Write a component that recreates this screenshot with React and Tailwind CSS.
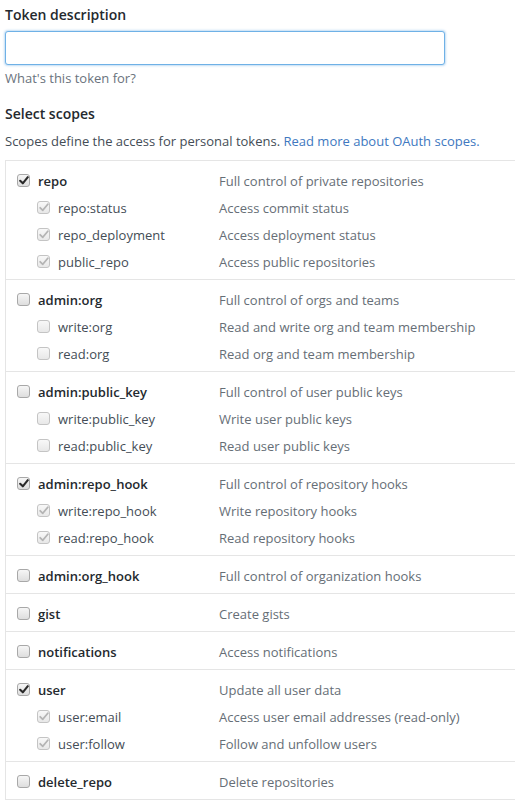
import React from "react";

const groups = [
  { name: "repo", desc: "Full control of private repositories", checked: true, subs: [
    ["repo:status", "Access commit status"],
    ["repo_deployment", "Access deployment status"],
    ["public_repo", "Access public repositories"],
  ]},
  { name: "admin:org", desc: "Full control of orgs and teams", checked: false, subs: [
    ["write:org", "Read and write org and team membership"],
    ["read:org", "Read org and team membership"],
  ]},
  { name: "admin:public_key", desc: "Full control of user public keys", checked: false, subs: [
    ["write:public_key", "Write user public keys"],
    ["read:public_key", "Read user public keys"],
  ]},
  { name: "admin:repo_hook", desc: "Full control of repository hooks", checked: true, subs: [
    ["write:repo_hook", "Write repository hooks"],
    ["read:repo_hook", "Read repository hooks"],
  ]},
  { name: "admin:org_hook", desc: "Full control of organization hooks", checked: false, subs: [] },
  { name: "gist", desc: "Create gists", checked: false, subs: [] },
  { name: "notifications", desc: "Access notifications", checked: false, subs: [] },
  { name: "user", desc: "Update all user data", checked: true, subs: [
    ["user:email", "Access user email addresses (read-only)"],
    ["user:follow", "Follow and unfollow users"],
  ]},
  { name: "delete_repo", desc: "Delete repositories", checked: false, subs: [] },
];

function Box({ checked, disabled }) {
  return (
    <span
      className={
        "inline-flex items-center justify-center w-[13px] h-[13px] rounded-[3px] border shrink-0 " +
        (disabled
          ? "border-[#c4c4c4] bg-gradient-to-b from-[#f8f8f8] to-[#e8e8e8]"
          : "border-[#a8a8a8] bg-gradient-to-b from-[#f6f6f6] to-[#dedede]")
      }
    >
      {checked && (
        <svg width="10" height="9" viewBox="0 0 10 9">
          <path
            d="M1.2 4.8 L3.8 7.3 L8.8 1.2"
            fill="none"
            stroke={disabled ? "#b4b4b4" : "#2a2a2a"}
            strokeWidth={disabled ? "1.8" : "2.1"}
            strokeLinecap="round"
            strokeLinejoin="round"
          />
        </svg>
      )}
    </span>
  );
}

function Row({ name, desc, checked, sub }) {
  return (
    <div className="flex items-center h-[27px]">
      <div className={"flex items-center w-[213px] " + (sub ? "pl-[31px]" : "pl-[11px]")}>
        <Box checked={checked} disabled={sub} />
        <span className={"ml-[8px] " + (sub ? "text-[#444d56]" : "font-semibold text-[#24292e]")}>{name}</span>
      </div>
      <span className="text-[#666e76]">{desc}</span>
    </div>
  );
}

export default function App() {
  return (
    <div
      className="w-[515px] h-[802px] overflow-hidden bg-white text-[13px] leading-[20px] text-[#24292e]"
      style={{ fontFamily: '"Open Sans", "Noto Sans", sans-serif' }}
    >
      <div className="pl-[5px]">
        <div className="pt-[5px] font-semibold text-[14px] leading-[20px]">Token description</div>
        <div className="mt-[6px] w-[440px] h-[34px] rounded-[3px] border border-[#6fb1e6] shadow-[0_0_2px_1px_rgba(120,180,230,0.45)] bg-white" />
        <div className="mt-[4px] text-[#6a737d] leading-[18px]">What's this token for?</div>
        <div className="mt-[17px] font-semibold text-[14px]">Select scopes</div>
        <div className="mt-[7px] text-[#444d56] whitespace-nowrap">
          Scopes define the access for personal tokens.{" "}
          <span className="text-[#4078c0]">Read more about OAuth scopes.</span>
        </div>
        <div className="mt-[9px] w-[540px] border-l border-t border-[#e5e5e5]">
          {groups.map((g) => (
            <div key={g.name} className="pt-[6px] pb-[4px] border-b border-[#e5e5e5]">
              <Row name={g.name} desc={g.desc} checked={g.checked} />
              {g.subs.map(([n, d]) => (
                <Row key={n} name={n} desc={d} checked={g.checked} sub />
              ))}
            </div>
          ))}
        </div>
      </div>
    </div>
  );
}
